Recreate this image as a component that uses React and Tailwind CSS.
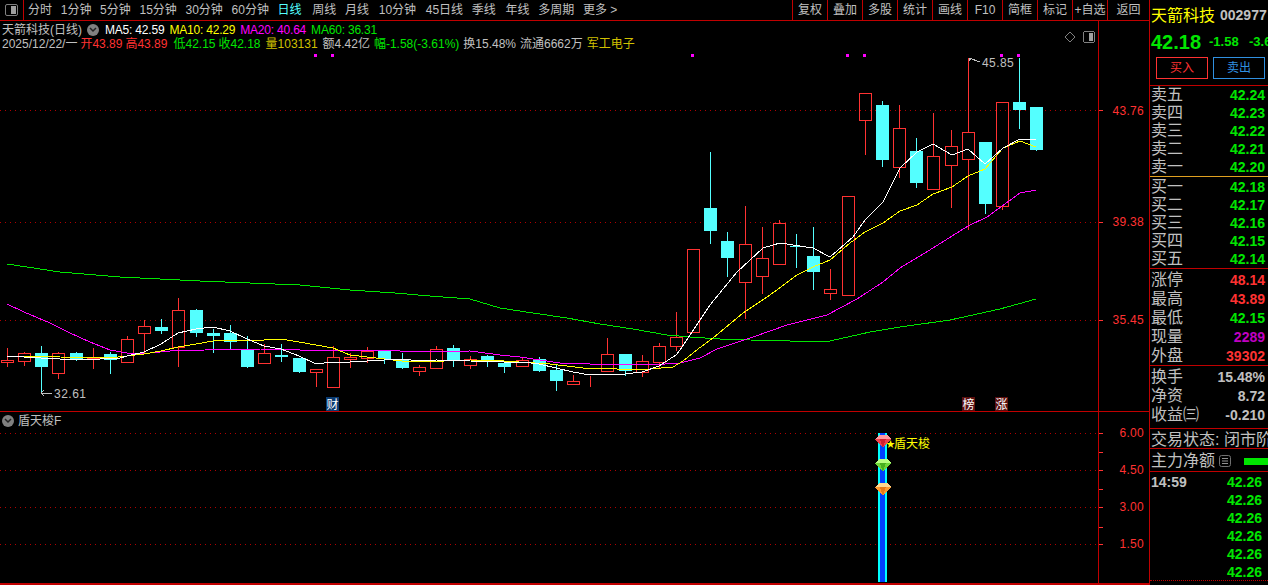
const FONT = { fontFamily: '"Liberation Sans", "Noto Sans CJK SC", sans-serif' };

const RED = "#ff3232";
const CYAN = "#54ffff";

const tabs = ["分时", "1分钟", "5分钟", "15分钟", "30分钟", "60分钟", "日线", "周线", "月线", "10分钟", "45日线", "季线", "年线", "多周期", "更多 >"];
const tabClass = {
  日线: "text-[#54ffff]",
  周线: "ml-[2px]",
  "10分钟": "ml-[1px]",
  "45日线": "ml-[1px]",
  年线: "ml-[1px]",
};
const tools = ["复权", "叠加", "多股", "统计", "画线", "F10", "简框", "标记", "+自选"];

// x, body top, body bottom, high, low, r = hollow red / c = solid cyan
const candles = [
  [7, 360, 362, 348, 367, "r"], [24, 353, 361, 352, 366, "r"], [41, 353, 367, 346, 393, "c"], [58, 353, 373, 352, 379, "r"],
  [76, 353, 360, 352, 361, "c"], [93, 358, 359, 348, 369, "r"], [110, 354, 360, 352, 374, "c"], [127, 339, 362, 336, 362, "r"],
  [144, 326, 333, 320, 353, "r"], [161, 327, 331, 319, 334, "c"], [178, 310, 347, 298, 367, "r"], [196, 310, 333, 309, 337, "c"],
  [213, 333, 336, 329, 353, "c"], [230, 333, 342, 325, 349, "c"], [247, 349, 367, 336, 368, "c"], [264, 353, 363, 344, 363, "r"],
  [281, 355, 357, 344, 362, "c"], [299, 358, 372, 358, 373, "c"], [316, 369, 372, 369, 387, "r"], [333, 357, 387, 346, 387, "r"],
  [350, 357, 359, 353, 368, "r"], [367, 351, 358, 347, 363, "r"], [384, 351, 359, 351, 364, "c"], [402, 359, 368, 353, 369, "c"],
  [419, 367, 371, 365, 376, "r"], [436, 349, 368, 346, 368, "r"], [453, 348, 361, 345, 367, "c"], [470, 359, 365, 356, 369, "r"],
  [487, 356, 362, 355, 367, "c"], [504, 363, 367, 363, 373, "c"], [522, 360, 366, 358, 367, "r"], [539, 359, 371, 357, 372, "c"],
  [556, 370, 381, 364, 391, "c"], [573, 381, 384, 375, 384, "r"], [590, 385, 385, 376, 387, "r"], [607, 354, 371, 338, 371, "r"],
  [625, 354, 371, 354, 376, "c"], [642, 361, 372, 355, 377, "r"], [659, 346, 362, 343, 369, "r"], [676, 337, 346, 312, 351, "r"],
  [693, 249, 332, 249, 332, "r"], [710, 208, 231, 152, 244, "c"], [727, 241, 258, 232, 277, "c"], [745, 244, 282, 206, 319, "r"],
  [762, 258, 276, 227, 294, "r"], [779, 223, 264, 220, 264, "r"], [796, 246, 247, 234, 268, "c"], [813, 256, 272, 227, 290, "c"],
  [830, 289, 293, 269, 300, "r"], [848, 196, 295, 196, 295, "r"], [865, 93, 120, 93, 155, "r"], [882, 105, 160, 101, 167, "c"],
  [899, 128, 167, 105, 178, "r"], [916, 151, 183, 138, 188, "c"], [933, 156, 189, 113, 190, "r"], [951, 146, 165, 130, 208, "r"],
  [968, 132, 159, 58, 230, "r"], [985, 142, 204, 142, 214, "c"], [1002, 102, 206, 102, 210, "r"], [1019, 102, 110, 58, 129, "c"],
  [1036, 107, 150, 107, 151, "c"],
];

const ma60 = "7,264 60,272 120,277 200,281 300,285 350,290 395,293 430,296 470,299 500,308 533,313 567,318 600,324 633,329 667,335 690,337 720,339 750,340 790,341 830,341 870,332 900,327 950,320 1000,309 1036,299";
const ma20 = "7,304 24,312 50,323 70,333 90,342 110,350 127,353 150,353 170,351 205,350 230,349 260,349 300,350 350,350 400,351 430,352 470,351 500,355 520,357 540,360 560,363 590,364 620,364 650,365 680,363 700,358 717,349 753,337 787,325 827,315 857,299 883,282 900,268 933,248 968,226 987,217 1020,193 1036,190";
const ma10 = "7,356 41,356 60,357 110,358 127,356 144,354 161,351 178,347 196,344 213,341 230,340 264,340 281,339 299,342 316,345 333,348 350,355 367,357 402,361 419,362 470,360 504,361 550,364 583,368 617,369 650,369 673,367 683,361 698,349 713,338 743,313 770,295 797,275 813,267 830,260 850,243 865,232 883,223 900,211 917,205 933,194 952,187 968,176 985,169 1003,148 1020,141 1036,147";
const ma5 = "7,356 41,358 60,359 100,359 120,358 127,356 144,352 161,344 178,333 196,329 213,327 230,331 247,339 264,346 281,349 299,356 316,364 333,362 350,362 367,361 384,360 402,359 419,361 436,360 470,361 504,362 522,362 539,364 556,368 573,372 590,375 607,374 625,374 642,372 659,366 676,355 680,350 710,305 737,272 763,248 780,243 813,248 830,257 853,237 865,220 883,202 900,168 917,152 933,144 952,155 968,149 985,164 1003,148 1020,139 1036,140";

const asks = [["卖五", "42.24"], ["卖四", "42.23"], ["卖三", "42.22"], ["卖二", "42.21"], ["卖一", "42.20"]];
const bids = [["买一", "42.18"], ["买二", "42.17"], ["买三", "42.16"], ["买四", "42.15"], ["买五", "42.14"]];
const stats = [
  ["涨停", "48.14", "text-[#ff3232]"],
  ["最高", "43.89", "text-[#ff3232]"],
  ["最低", "42.15", "text-[#00e600]"],
  ["现量", "2289", "text-[#c000c0]"],
  ["外盘", "39302", "text-[#ff3232]"],
];
const finance = [["换手", "15.48%"], ["净资", "8.72"], ["收益㈢", "-0.210"]];

function Candle({ c }) {
  const [x, top, bot, hi, lo, kind] = c;
  const color = kind === "r" ? RED : CYAN;
  return (
    <g>
      {hi < top && <rect x={x} y={hi} width="1" height={top - hi} fill={color} />}
      {lo > bot && <rect x={x} y={bot} width="1" height={lo - bot} fill={color} />}
      {kind === "r" ? (
        <rect x={x - 6 + 0.5} y={top + 0.5} width="12" height={Math.max(bot - top, 0)} fill="none" stroke={color} />
      ) : (
        <rect x={x - 6} y={top} width="13" height={Math.max(bot - top, 1)} fill={color} />
      )}
    </g>
  );
}

function Gem({ y, light, mid, dark }) {
  return (
    <g transform={`translate(883 ${y})`}>
      <polygon points="-8,-2 -4,-6 4,-6 8,-2 0,7" fill={mid} />
      <polygon points="-4,-6 4,-6 8,-2 -8,-2" fill={light} />
      <polygon points="-3,-2 3,-2 0,7" fill={dark} />
    </g>
  );
}

function Dots({ y, w = 1098 }) {
  return <line x1="0" x2={w} y1={y + 0.5} y2={y + 0.5} stroke="#b00000" strokeDasharray="1 4" />;
}

function Chevron() {
  return (
    <span className="flex h-[12px] w-[12px] items-center justify-center rounded-full bg-[#808080]">
      <svg width="8" height="6" viewBox="0 0 8 6">
        <path d="M1 1 L4 4 L7 1" fill="none" stroke="#222" strokeWidth="1.5" />
      </svg>
    </span>
  );
}

function MainChart() {
  return (
    <svg className="block h-[390px] w-[1098px]" viewBox="0 21 1098 390" shapeRendering="crispEdges" style={FONT}>
      <Dots y={110} />
      <Dots y={222} />
      <Dots y={320} />
      {[315, 332, 692, 847, 864, 1001, 1018].map((x) => (
        <rect key={x} x={x - 1} y="54" width="3" height="3" fill="#ff00ff" />
      ))}
      {candles.map((c) => (
        <Candle key={c[0]} c={c} />
      ))}
      <polyline points={ma60} fill="none" stroke="#00e600" strokeWidth="1" />
      <polyline points={ma20} fill="none" stroke="#ff00ff" strokeWidth="1" />
      <polyline points={ma10} fill="none" stroke="#ffff00" strokeWidth="1" />
      <polyline points={ma5} fill="none" stroke="#ffffff" strokeWidth="1" />

      <path d="M969 61 L971 58 M969 58 L980 62" stroke="#c0c0c0" fill="none" />
      <text x="982" y="67" fontSize="12" letterSpacing="0.4" fill="#c0c0c0">45.85</text>
      <path d="M41 393 L44 390 M41 393 L44 396 M42 393 L52 393" stroke="#c0c0c0" fill="none" />
      <text x="54" y="398" fontSize="12" letterSpacing="0.5" fill="#c0c0c0">32.61</text>

      <polygon points="1070,32 1075,37 1070,42 1065,37" fill="none" stroke="#808080" />
      <rect x="1083.5" y="31.5" width="11" height="11" rx="2" fill="none" stroke="#808080" />
      <rect x="1089" y="33" width="4" height="8" fill="#a0a0a0" />

      <rect x="326" y="397" width="13" height="14" fill="#0a3a70" />
      <text x="326.5" y="408.5" fontSize="12" fill="#ffffff">财</text>
      <rect x="962" y="397" width="13" height="14" fill="#5a0f0f" />
      <text x="962.5" y="408.5" fontSize="12" fill="#ffffff">榜</text>
      <rect x="995" y="397" width="13" height="14" fill="#5a0f0f" />
      <text x="995.5" y="408.5" fontSize="12" fill="#ffffff">涨</text>
    </svg>
  );
}

function SubChart() {
  return (
    <svg className="block h-[171px] w-[1098px]" viewBox="0 412 1098 171" shapeRendering="crispEdges" style={FONT}>
      <Dots y={433} />
      <Dots y={470} />
      <Dots y={507} />
      <Dots y={544} />
      <rect x="878" y="433" width="9" height="149" fill="#00ffff" />
      <rect x="880" y="433" width="5" height="149" fill="#0040ff" />
      <Gem y={441} light="#ff9aa0" mid="#f0404a" dark="#d02030" />
      <Gem y={465} light="#b8ff80" mid="#70d838" dark="#48b020" />
      <Gem y={489} light="#ffd890" mid="#ff9a30" dark="#e87818" />
      <text x="886" y="447" fontSize="9" fill="#ffff00">★</text>
      <text x="894" y="448" fontSize="12" fill="#ffff00">盾天梭</text>
    </svg>
  );
}

function Axis({ labels, ticks, top, height }) {
  return (
    <svg className="block w-[50px]" style={{ ...FONT, height }} viewBox={`1099 ${top} 50 ${height}`} shapeRendering="crispEdges">
      {ticks.map((y) => (
        <rect key={y} x="1099" y={y} width="4" height="1" fill={RED} />
      ))}
      {labels.map(([y, t]) => (
        <text key={t} x="1144" y={y + 4} textAnchor="end" fontSize="12" letterSpacing="0.3" fill={RED}>{t}</text>
      ))}
    </svg>
  );
}

function QuoteRow({ label, value, cls = "text-[#00e600]", rowCls = "h-[18px]" }) {
  return (
    <div className={`flex items-center justify-between whitespace-nowrap pl-[1px] pr-[3px] ${rowCls}`}>
      <span className="text-[16px] leading-[18px] text-[#c0c0c0]">{label}</span>
      <span className={`text-[14px] font-bold leading-[18px] ${cls}`}>{value}</span>
    </div>
  );
}

export default function App() {
  return (
    <div className="flex h-[585px] w-[1268px] overflow-hidden bg-black text-[12px] text-[#c0c0c0]" style={FONT}>
      <div className="flex w-[1149px] shrink-0 flex-col">
        <div className="flex h-[21px] shrink-0 items-center border-b border-[#c00000]">
          <div className="flex h-full w-[24px] shrink-0 items-center justify-center border-r border-[#c00000]">
            <div className="flex h-[12px] w-[13px] justify-end rounded-[2px] border border-[#808080] p-[1px]">
              <div className="w-[5px] bg-[#a0a0a0]" />
            </div>
          </div>
          <div className="ml-[4px] flex gap-[8.7px] whitespace-nowrap">
            {tabs.map((t) => (
              <span key={t} className={tabClass[t] || ""}>{t}</span>
            ))}
          </div>
          <div className="ml-auto flex h-full">
            {tools.map((t) => (
              <div key={t} className="flex w-[35px] items-center justify-center border-l border-[#c00000]">{t}</div>
            ))}
            <div className="flex w-[42px] items-center justify-center border-l border-[#c00000]">返回</div>
          </div>
        </div>

        <div className="relative flex h-[390px] shrink-0">
          <MainChart />
          <div className="border-l border-[#c00000]">
            <Axis top={21} height={390} ticks={[110, 222, 320]} labels={[[111, "43.76"], [222, "39.38"], [320, "35.45"]]} />
          </div>
          <div className="absolute left-[2px] top-[2px] whitespace-nowrap">
            <div className="flex h-[14px] items-center">
              <span>天箭科技(日线)</span>
              <span className="ml-[5px]"><Chevron /></span>
              <span className="ml-[6px] tracking-[-0.2px] text-white">MA5: 42.59</span>
              <span className="ml-[5px] tracking-[-0.2px] text-[#ffff00]">MA10: 42.29</span>
              <span className="ml-[5px] tracking-[-0.2px] text-[#ff00ff]">MA20: 40.64</span>
              <span className="ml-[5px] tracking-[-0.2px] text-[#00e600]">MA60: 36.31</span>
            </div>
            <div className="flex h-[14px] items-center">
              <span>2025/12/22/一</span>
              <span className="ml-[3px] text-[#ff3232]">开43.89</span>
              <span className="ml-[3px] text-[#ff3232]">高43.89</span>
              <span className="ml-[6px] text-[#00e600]">低42.15</span>
              <span className="ml-[3px] text-[#00e600]">收42.18</span>
              <span className="ml-[5px] text-[#d0c000]">量103131</span>
              <span className="ml-[5px]">额4.42亿</span>
              <span className="ml-[4px] text-[#00e600]">幅-1.58(-3.61%)</span>
              <span className="ml-[4px]">换15.48%</span>
              <span className="ml-[4px]">流通6662万</span>
              <span className="ml-[4px] text-[#d0c000]">军工电子</span>
            </div>
          </div>
        </div>

        <div className="relative flex min-h-0 flex-1 flex-col border-b-2 border-t border-[#c00000]">
          <div className="flex">
            <SubChart />
            <div className="border-l border-[#c00000]">
              <Axis top={412} height={171} ticks={[433, 452, 470, 489, 507, 527, 544]} labels={[[433, "6.00"], [470, "4.50"], [507, "3.00"], [544, "1.50"]]} />
            </div>
          </div>
          <div className="absolute left-[2px] top-[1px] flex h-[16px] items-center gap-[4px] whitespace-nowrap">
            <Chevron />
            <span>盾天梭F</span>
          </div>
        </div>
      </div>

      <div className="flex w-[119px] shrink-0 flex-col overflow-hidden border-l border-[#c00000]">
        <div className="h-[86px] shrink-0 border-b border-[#c00000] pl-[1px]">
          <div className="flex h-[31px] items-center gap-[5px] whitespace-nowrap">
            <span className="shrink-0 text-[16px] text-[#ffff00]">天箭科技</span>
            <span className="shrink-0 text-[14px] font-bold">002977</span>
          </div>
          <div className="flex h-[22px] items-center whitespace-nowrap font-bold text-[#00e600]">
            <span className="w-[58px] shrink-0 text-[20px]">42.18</span>
            <span className="w-[40px] shrink-0 text-[13px]">-1.58</span>
            <span className="shrink-0 text-[13px]">-3.61%</span>
          </div>
          <div className="mt-[4px] flex gap-[5px] pl-[5px]">
            <div className="flex h-[22px] w-[52px] items-center justify-center border border-[#ff3232] text-[#ff3232]">买入</div>
            <div className="flex h-[22px] w-[52px] items-center justify-center border border-[#3090e0] text-[#3090e0]">卖出</div>
          </div>
        </div>

        <div className="border-b border-[#e0a020]">
          {asks.map(([l, v]) => (
            <QuoteRow key={l} label={l} value={v} />
          ))}
        </div>
        <div className="border-b border-[#c00000] pt-px">
          {bids.map(([l, v]) => (
            <QuoteRow key={l} label={l} value={v} />
          ))}
        </div>
        <div className="border-b border-[#c00000] pt-px">
          {stats.map(([l, v, c]) => (
            <QuoteRow key={l} label={l} value={v} cls={c} rowCls="h-[19px]" />
          ))}
        </div>
        <div className="border-b border-[#c00000] pb-[4px] pt-px">
          {finance.map(([l, v]) => (
            <QuoteRow key={l} label={l} value={v} cls="text-[#c0c0c0]" rowCls="h-[19px]" />
          ))}
        </div>
        <div className="flex h-[20px] items-center overflow-hidden whitespace-nowrap border-b border-[#c00000] pl-[1px] pt-[2px] text-[16px]">
          交易状态: 闭市阶段
        </div>
        <div className="flex h-[23px] items-center overflow-hidden whitespace-nowrap border-b border-[#c00000] pl-[1px] pt-[2px] text-[16px]">
          <span>主力净额</span>
          <svg className="ml-[4px] shrink-0" width="12" height="12" viewBox="0 0 12 12">
            <rect x="0.5" y="0.5" width="11" height="11" rx="2" fill="none" stroke="#707070" />
            <path d="M3 3.5 H9 M3 6 H9 M3 8.5 H9" stroke="#909090" />
          </svg>
          <div className="ml-[13px] h-[7px] w-[30px] shrink-0 bg-[#00e600]" />
        </div>
        <div className="border-b border-dotted border-[#c00000]">
          {["14:59", "", "", "", "", ""].map((t, i) => (
            <div key={i} className="flex h-[18px] items-center justify-between pl-[1px] pr-[6px] pt-[2px] text-[14px] font-bold">
              <span>{t}</span>
              <span className="text-[#00e600]">42.26</span>
            </div>
          ))}
        </div>
      </div>
    </div>
  );
}
